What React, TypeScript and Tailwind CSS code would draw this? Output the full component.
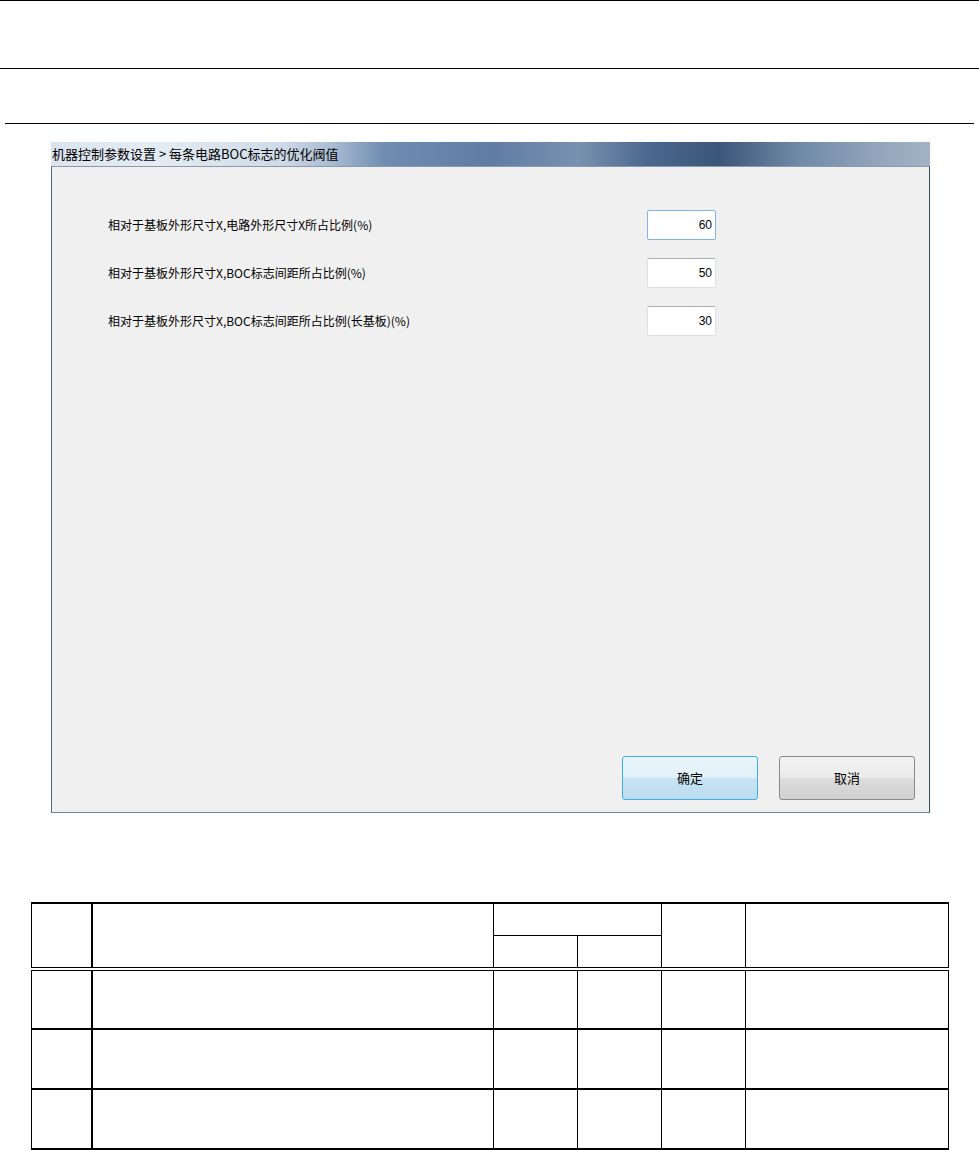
// App.tsx — 机器控制参数设置对话框截图 + 下方空白表格
const cjk = "font-['Noto_Sans_CJK_SC','Microsoft_YaHei',sans-serif]";

interface ParamRowProps {
  label: string;
  value: string;
  focused?: boolean;
}

function ParamRow({ label, value, focused = false }: ParamRowProps) {
  return (
    <div className="flex h-[30px] items-center">
      <span className={`w-[539px] text-[12px] leading-[14px] text-black ${cjk}`}>{label}</span>
      <div
        className={`flex h-[30px] w-[69px] items-center justify-end rounded-[2px] border bg-white pr-[3px] font-['Liberation_Sans',sans-serif] text-[12px] text-black ${
          focused ? "border-[#7eb4ea]" : "border-[#dbdfe6] border-t-[#abadb3]"
        }`}
      >
        {value}
      </div>
    </div>
  );
}

function DialogWindow() {
  return (
    <div className="ml-[51px] w-[879px]">
      <div className="flex h-[24px] items-center bg-[linear-gradient(to_right,#dbe4ee_0%,#e4ebf3_12%,#cfdbe8_26%,#a9bcd2_32%,#6f8cb1_38%,#5f7ca3_50%,#7891b1_60%,#4a678d_68%,#3b5678_76%,#6f89a8_85%,#93a5bc_94%,#a3b3c6_100%)] pl-[1px]">
        <span className={`text-[13px] leading-[16px] text-black ${cjk}`}>
          机器控制参数设置 &gt; 每条电路BOC标志的优化阀值
        </span>
      </div>
      <div className="flex h-[647px] flex-col border border-t-[#8d99a8] border-l-[#55667d] border-r-[#3d4a5c] border-b-[#6c84a3] bg-[#f0f0f0]">
        <div className="flex flex-col gap-[18px] pl-[56px] pt-[43px]">
          <ParamRow label="相对于基板外形尺寸X,电路外形尺寸X所占比例(%)" value="60" focused />
          <ParamRow label="相对于基板外形尺寸X,BOC标志间距所占比例(%)" value="50" />
          <ParamRow label="相对于基板外形尺寸X,BOC标志间距所占比例(长基板)(%)" value="30" />
        </div>
        <div className="mt-auto flex justify-end gap-[21px] pb-[12px] pr-[14px]">
          <button
            className={`h-[44px] w-[136px] rounded-[3px] border border-[#3daee9] bg-[linear-gradient(to_bottom,#eaf5fc_0%,#e2f0f9_48%,#c8e3f3_52%,#bcdcee_100%)] text-[13px] text-black ${cjk}`}
          >
            确定
          </button>
          <button
            className={`h-[44px] w-[136px] rounded-[3px] border border-[#8a8a8a] bg-[linear-gradient(to_bottom,#f2f2f2_0%,#ebebeb_48%,#dddddd_52%,#cfcfcf_100%)] text-[13px] text-black ${cjk}`}
          >
            取消
          </button>
        </div>
      </div>
    </div>
  );
}

function BlankTable() {
  const rows = [0, 1, 2];
  return (
    <table className="ml-[31px] w-[917px] table-fixed border-collapse">
      <colgroup>
        <col className="w-[60px]" />
        <col className="w-[402px]" />
        <col className="w-[84px]" />
        <col className="w-[84px]" />
        <col className="w-[84px]" />
        <col className="w-[203px]" />
      </colgroup>
      <thead>
        <tr className="h-[32px]">
          <th rowSpan={2} className="border border-t-2 border-r-2 border-black" />
          <th rowSpan={2} className="border border-t-2 border-black" />
          <th colSpan={2} className="border border-t-2 border-black" />
          <th rowSpan={2} className="border border-t-2 border-black" />
          <th rowSpan={2} className="border border-t-2 border-r-[1.5px] border-black" />
        </tr>
        <tr className="h-[34px]">
          <th className="border border-black" />
          <th className="border border-black" />
        </tr>
      </thead>
      <tbody>
        {rows.map((r) => {
          // 表头下方的双线
          const top = r === 0 ? "border-t-[4px] [border-top-style:double]" : "";
          return (
            <tr key={r} className="h-[60px]">
              <td className={`border border-r-2 border-b-2 border-black ${top}`} />
              <td className={`border border-b-2 border-black ${top}`} />
              <td className={`border border-b-2 border-black ${top}`} />
              <td className={`border border-b-2 border-black ${top}`} />
              <td className={`border border-b-2 border-black ${top}`} />
              <td className={`border border-r-[1.5px] border-b-2 border-black ${top}`} />
            </tr>
          );
        })}
      </tbody>
    </table>
  );
}

export default function App() {
  return (
    <div className="h-[1151px] w-[979px] overflow-hidden bg-white">
      <div className="h-[68px] border-t border-black" />
      <div className="h-[55px] border-t border-black" />
      <div className="ml-[5px] h-[19px] w-[969px] border-t border-black" />
      <DialogWindow />
      <div className="h-[89px]" />
      <BlankTable />
    </div>
  );
}
